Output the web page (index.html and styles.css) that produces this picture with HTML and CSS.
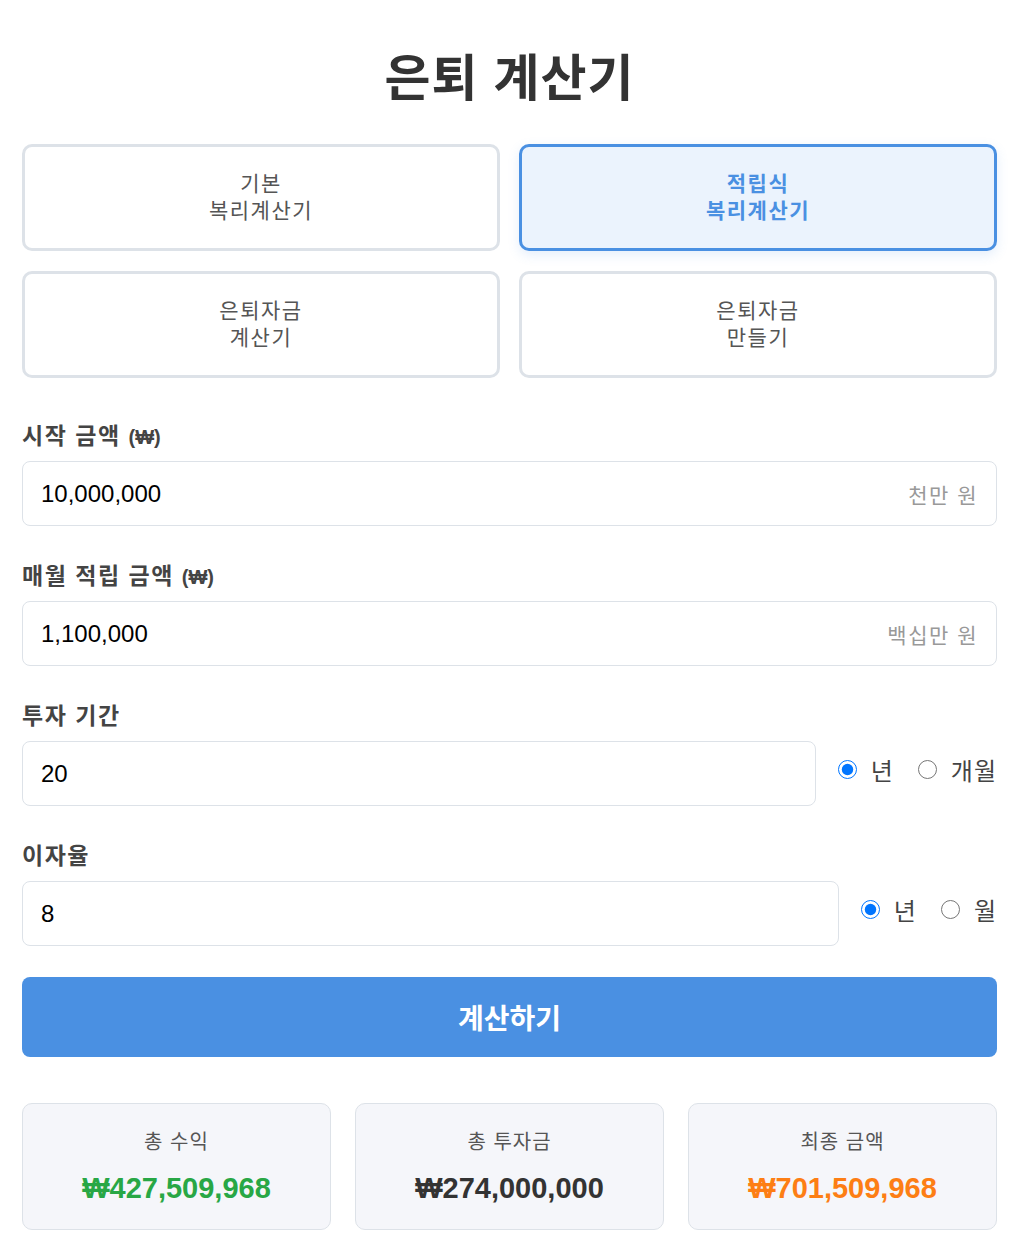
FILE: index.html
```html
<!DOCTYPE html>
<html lang="ko">
<head>
    <meta charset="UTF-8">
    <meta name="viewport" content="width=device-width, initial-scale=1.0">
    <title>은퇴 계산기</title>
    <link rel="stylesheet" href="styles.css">
</head>
<body>
    <div class="app">
        <h1 class="title">은퇴 계산기</h1>

        <div class="tabs">
            <button class="tab">기본<br>복리계산기</button>
            <button class="tab is-active">적립식<br>복리계산기</button>
            <button class="tab">은퇴자금<br>계산기</button>
            <button class="tab">은퇴자금<br>만들기</button>
        </div>

        <div class="field">
            <label class="label">시작 금액 <small>(₩)</small></label>
            <div class="input-box">
                <input class="input" type="text" value="10,000,000">
                <span class="hint">천만 원</span>
            </div>
        </div>

        <div class="field">
            <label class="label">매월 적립 금액 <small>(₩)</small></label>
            <div class="input-box">
                <input class="input" type="text" value="1,100,000">
                <span class="hint">백십만 원</span>
            </div>
        </div>

        <div class="field">
            <label class="label">투자 기간</label>
            <div class="row">
                <div class="input-box grow">
                    <input class="input" type="text" value="20">
                </div>
                <div class="radios">
                    <label class="radio"><input type="radio" name="period" checked> 년</label>
                    <label class="radio"><input type="radio" name="period"> 개월</label>
                </div>
            </div>
        </div>

        <div class="field">
            <label class="label">이자율</label>
            <div class="row">
                <div class="input-box grow">
                    <input class="input" type="text" value="8">
                </div>
                <div class="radios">
                    <label class="radio"><input type="radio" name="rate" checked> 년</label>
                    <label class="radio"><input type="radio" name="rate"> 월</label>
                </div>
            </div>
        </div>

        <button class="button" type="button">계산하기</button>

        <div class="results">
            <div class="card">
                <div class="card-label">총 수익</div>
                <div class="card-value is-green">₩427,509,968</div>
            </div>
            <div class="card">
                <div class="card-label">총 투자금</div>
                <div class="card-value">₩274,000,000</div>
            </div>
            <div class="card">
                <div class="card-label">최종 금액</div>
                <div class="card-value is-orange">₩701,509,968</div>
            </div>
        </div>
    </div>
</body>
</html>
```

FILE: styles.css
```css
* {
    margin: 0;
    padding: 0;
    box-sizing: border-box;
}
body {
    font-family: "Liberation Sans", "Noto Sans CJK KR", sans-serif;
    background-color: #ffffff;
    color: #333;
}
.app {
    width: 975px;
    margin-left: 22px;
    padding-top: 42px;
}
.title {
    font-family: "Noto Sans CJK KR", sans-serif;
    font-size: 50px;
    font-weight: bold;
    text-align: center;
    color: #333;
    line-height: 64px;
    letter-spacing: 1px;
    margin-bottom: 38px;
}

.tabs {
    display: grid;
    grid-template-columns: 1fr 1fr;
    gap: 20px 19px;
    margin-bottom: 39px;
}
.tab {
    height: 107px;
    padding-bottom: 4px;
    background: #ffffff;
    border: 3px solid #dde2e8;
    border-radius: 10px;
    font-family: "Noto Sans CJK KR", sans-serif;
    font-size: 21px;
    line-height: 27px;
    letter-spacing: 1.5px;
    color: #555;
    cursor: pointer;
}
.tab.is-active {
    background: #ebf3fd;
    border-color: #4a90e2;
    color: #4a90e2;
    font-weight: bold;
    box-shadow: 0 4px 12px rgba(74, 144, 226, 0.15);
}

.field {
    margin-bottom: 31px;
}
.label {
    display: block;
    height: 34px;
    font-family: "Noto Sans CJK KR", sans-serif;
    font-size: 23px;
    font-weight: bold;
    color: #444;
    line-height: 34px;
    letter-spacing: 1.5px;
    margin-bottom: 10px;
}
.label small {
    font-family: "Liberation Sans", sans-serif;
    font-size: 20px;
    line-height: 1;
    letter-spacing: 0;
}

.row {
    display: flex;
    align-items: center;
    gap: 22px;
}
.grow {
    flex: 1;
}
.input-box {
    position: relative;
}
.input {
    display: block;
    width: 100%;
    height: 65px;
    padding: 0 18px;
    border: 1px solid #dde2e8;
    border-radius: 8px;
    font-family: "Liberation Sans", sans-serif;
    font-size: 24px;
    color: #000;
    outline: none;
}
.hint {
    position: absolute;
    right: 19px;
    top: 50%;
    transform: translateY(-50%);
    font-family: "Noto Sans CJK KR", sans-serif;
    font-size: 21px;
    letter-spacing: 1.5px;
    color: #999;
}

.radios {
    display: flex;
    gap: 24px;
}
.radio {
    display: flex;
    align-items: center;
    gap: 14px;
    font-family: "Noto Sans CJK KR", sans-serif;
    font-size: 24px;
    letter-spacing: 1px;
    color: #444;
    margin-top: -8px;
}
.radio input {
    width: 19px;
    height: 19px;
    margin: 0;
    accent-color: #0075ff;
}

.button {
    display: block;
    width: 100%;
    height: 80px;
    background-color: #4a90e2;
    color: #ffffff;
    border: none;
    border-radius: 8px;
    font-family: "Noto Sans CJK KR", sans-serif;
    font-size: 28px;
    font-weight: bold;
    cursor: pointer;
}

.results {
    display: grid;
    grid-template-columns: 1fr 1fr 1fr;
    gap: 24px;
    margin-top: 46px;
}
.card {
    height: 127px;
    background: #f5f6fa;
    border: 1px solid #dde2e8;
    border-radius: 10px;
    text-align: center;
    padding-top: 22px;
}
.card-label {
    font-family: "Noto Sans CJK KR", sans-serif;
    font-size: 20px;
    color: #555;
    line-height: 30px;
    letter-spacing: 1px;
    margin-bottom: 14px;
}
.card-value {
    font-family: "Liberation Sans", "Noto Sans CJK KR", sans-serif;
    font-size: 29px;
    font-weight: bold;
    color: #333;
    line-height: 36px;
}
.card-value.is-green { color: #28a745; }
.card-value.is-orange { color: #fd7e14; }
```
